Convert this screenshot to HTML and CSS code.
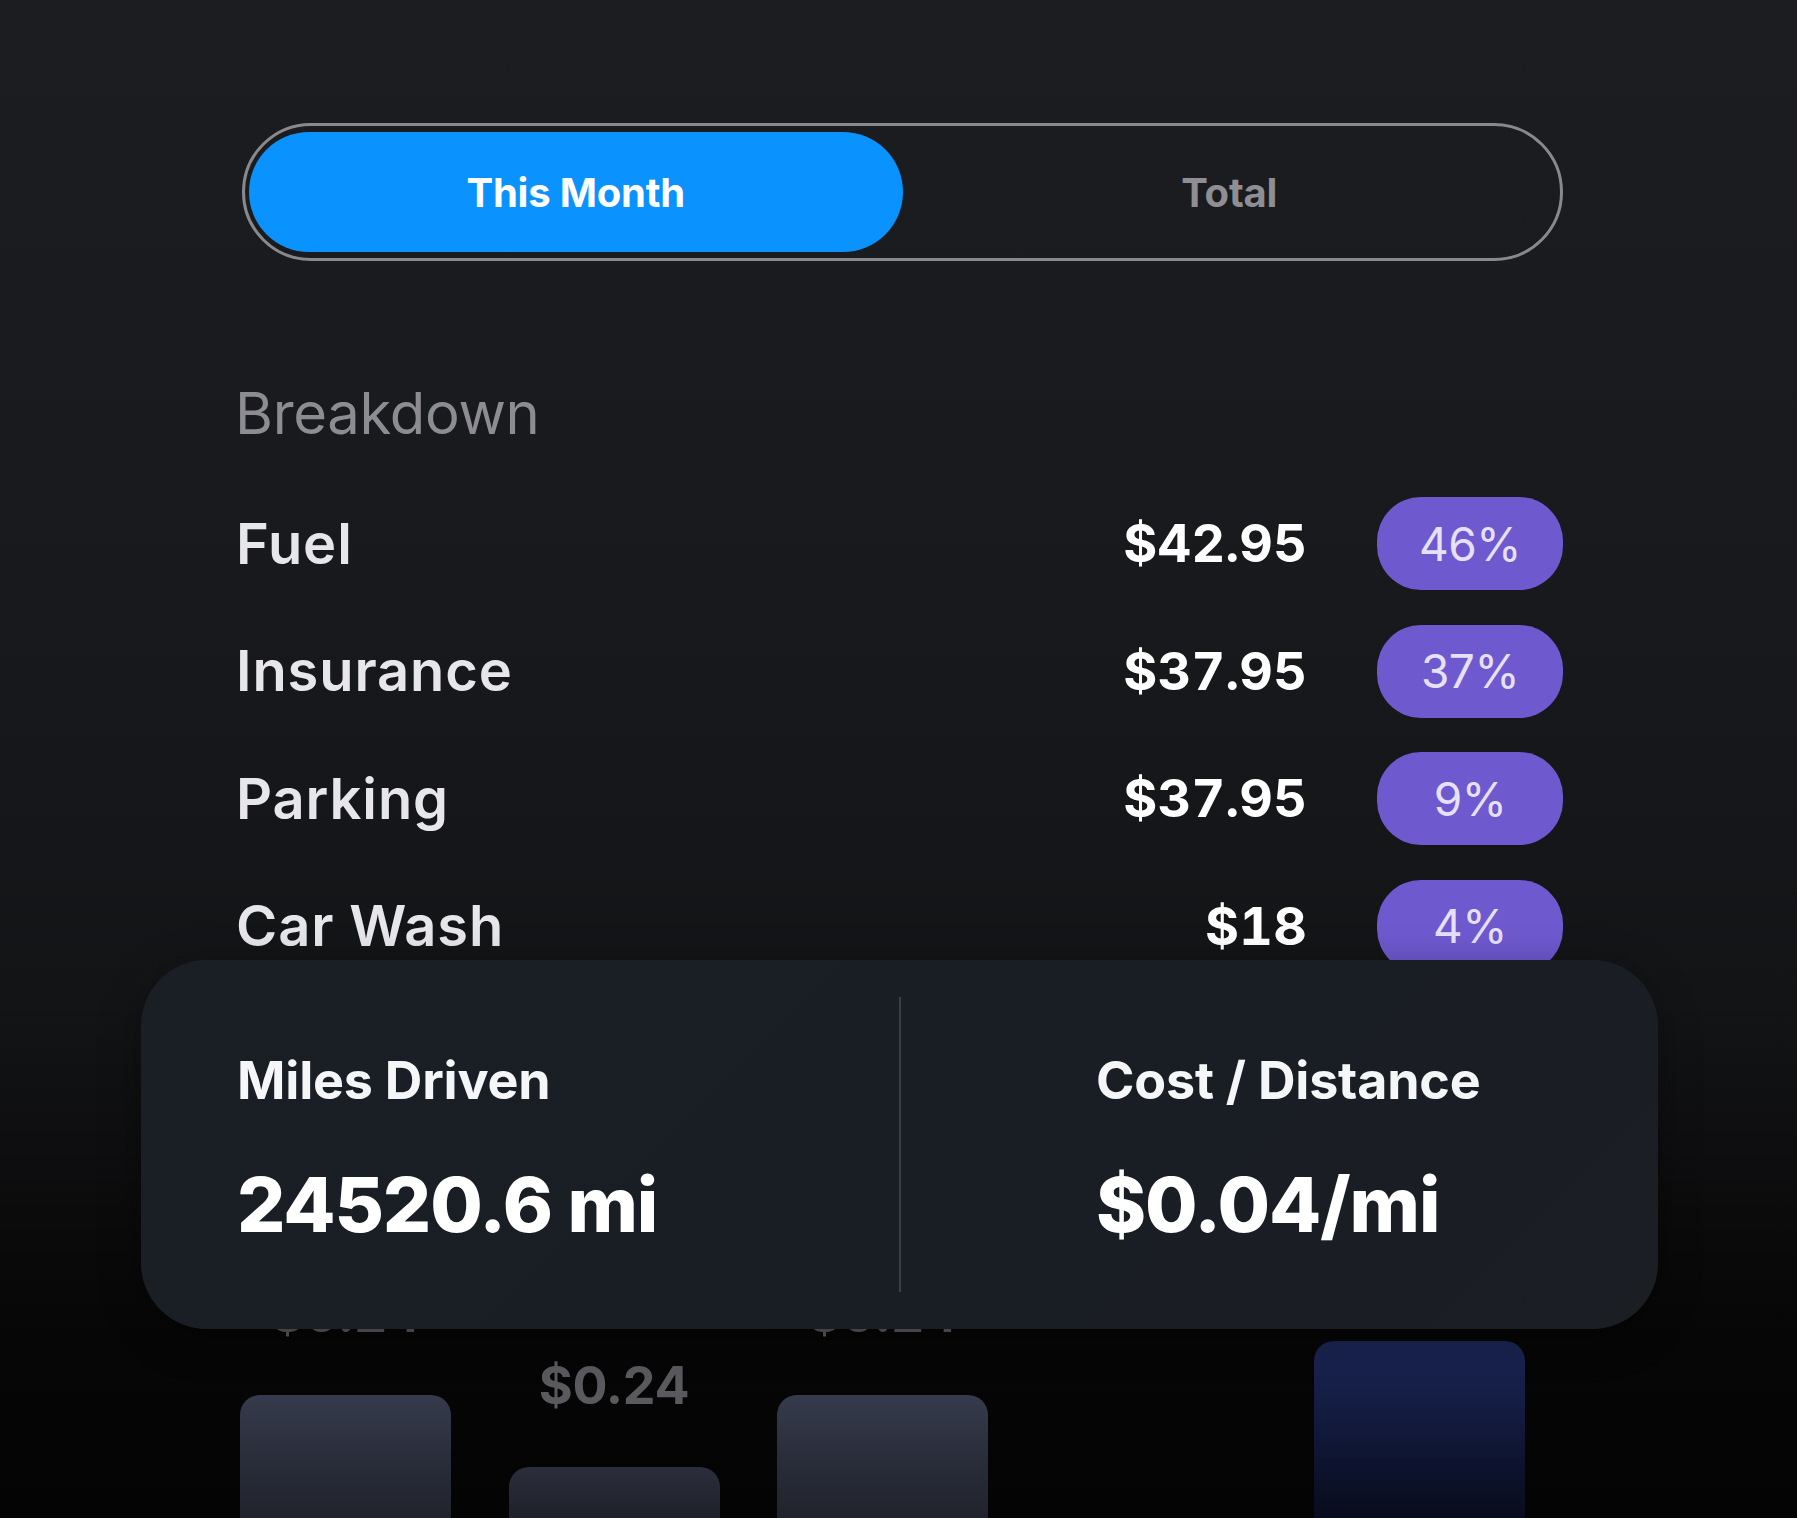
FILE: index.html
```html
<!DOCTYPE html>
<html lang="en">
<head>
<meta charset="utf-8">
<title>Breakdown</title>
<link rel="stylesheet" href="styles.css">
</head>
<body>
<div class="screen">
  <div class="toggle">
    <div class="seg seg-active">This Month</div>
    <div class="seg">Total</div>
  </div>

  <h2 class="section-title">Breakdown</h2>

  <div class="rows">
    <div class="row">
      <span class="row-label">Fuel</span>
      <span class="row-amount">$42.95</span>
      <span class="badge">46%</span>
    </div>
    <div class="row">
      <span class="row-label">Insurance</span>
      <span class="row-amount">$37.95</span>
      <span class="badge">37%</span>
    </div>
    <div class="row">
      <span class="row-label">Parking</span>
      <span class="row-amount">$37.95</span>
      <span class="badge">9%</span>
    </div>
    <div class="row">
      <span class="row-label">Car Wash</span>
      <span class="row-amount">$18</span>
      <span class="badge">4%</span>
    </div>
  </div>

  <div class="chart">
    <div class="col">
      <span class="col-label">$0.24</span>
      <div class="bar bar-gray" style="height:123px"></div>
    </div>
    <div class="col">
      <span class="col-label">$0.24</span>
      <div class="bar bar-gray-low" style="height:51px"></div>
    </div>
    <div class="col">
      <span class="col-label">$0.24</span>
      <div class="bar bar-gray" style="height:123px"></div>
    </div>
    <div class="col"></div>
    <div class="col">
      <div class="bar bar-blue" style="height:177px"></div>
    </div>
  </div>

  <div class="summary">
    <div class="stat stat-left">
      <div class="stat-title">Miles Driven</div>
      <div class="stat-value">24520.6 mi</div>
    </div>
    <div class="divider"></div>
    <div class="stat stat-right">
      <div class="stat-title">Cost / Distance</div>
      <div class="stat-value">$0.04/mi</div>
    </div>
  </div>
</div>
</body>
</html>
```

FILE: styles.css
```css
html, body {
  margin: 0;
  padding: 0;
}

body {
  width: 1797px;
  height: 1518px;
  overflow: hidden;
  background: linear-gradient(180deg, #1c1d20 0%, #18191c 40%, #131416 66%, #0b0b0c 80%, #060606 88%, #040404 100%);
  font-family: Inter, "Noto Sans", "Liberation Sans", sans-serif;
  color: #ffffff;
}

.screen {
  position: relative;
  box-sizing: border-box;
  height: 1518px;
  padding: 123px 234px 0 235px;
  display: flex;
  flex-direction: column;
}

/* Toggle */
.toggle {
  display: flex;
  margin-left: 7px;
  border: 3px solid #88888d;
  border-radius: 999px;
  padding: 6px 4px;
}

.seg {
  flex: 1;
  height: 120px;
  display: flex;
  align-items: center;
  justify-content: center;
  font-size: 40px;
  font-weight: 700;
  letter-spacing: -0.2px;
  color: #8e8e93;
  border-radius: 60px;
}

.seg-active {
  background: #0a92ff;
  color: #ffffff;
}

/* Breakdown */
.section-title {
  margin: 117px 0 0 0;
  font-size: 58px;
  line-height: 70px;
  font-weight: 400;
  color: #8c8c92;
  letter-spacing: -0.3px;
}

.rows {
  margin-top: 49px;
  display: flex;
  flex-direction: column;
  gap: 34.5px;
}

.row {
  display: flex;
  align-items: center;
  height: 93px;
}

.row-label {
  flex: 1;
  padding-left: 1px;
  font-size: 56px;
  font-weight: 600;
  color: #e6e6eb;
  letter-spacing: 0.9px;
}

.row-amount {
  font-size: 52px;
  font-weight: 700;
  color: #ffffff;
  letter-spacing: 0.2px;
  font-variant-numeric: tabular-nums;
}

.badge {
  margin-left: 70px;
  width: 186px;
  height: 93px;
  border-radius: 44px;
  background: #6e59cf;
  color: #e6e1f6;
  font-size: 46px;
  font-weight: 400;
  letter-spacing: -0.5px;
  display: flex;
  align-items: center;
  justify-content: center;
}

/* Chart */
.chart {
  flex: 1;
  display: flex;
  align-items: flex-end;
  gap: 57.5px;
  margin-left: 5px;
}

.col {
  width: 211px;
  display: flex;
  flex-direction: column;
  align-items: center;
}

.col-label {
  font-size: 52px;
  line-height: 52px;
  font-weight: 700;
  color: #5a5a5e;
  letter-spacing: -0.3px;
  margin-bottom: 55px;
}

.bar {
  width: 100%;
  border-radius: 20px 20px 0 0;
}

.bar-gray {
  background: linear-gradient(180deg, #363b4d 0%, #2a2e3b 50%, #20232b 100%);
}

.bar-gray-low {
  background: linear-gradient(180deg, #2b2e3b 0%, #1f2129 100%);
}

.bar-blue {
  background: linear-gradient(180deg, #1b2655 0%, #121a3d 45%, #080c1d 100%);
}

/* Summary card overlay */
.summary {
  position: absolute;
  left: 141px;
  top: 960px;
  width: 1517px;
  height: 369px;
  box-sizing: border-box;
  display: flex;
  border-radius: 66px;
  background: linear-gradient(135deg, #1a1e25 0%, #191d24 60%, #1b1f24 100%);
  box-shadow: 0 10px 40px rgba(0, 0, 0, 0.35);
}

.stat {
  box-sizing: border-box;
  padding-top: 90px;
}

.stat-left {
  width: 758px;
  padding-left: 96px;
}

.stat-right {
  flex: 1;
  padding-left: 195px;
}

.divider {
  width: 2px;
  margin: 37px 0;
  background: #3a3f46;
}

.stat-title {
  font-size: 52px;
  line-height: 62px;
  font-weight: 700;
  letter-spacing: -0.2px;
  color: #f5f6f8;
}

.stat-value {
  margin-top: 47px;
  font-size: 76px;
  line-height: 91px;
  font-weight: 800;
  letter-spacing: -1.1px;
  color: #ffffff;
}
```
